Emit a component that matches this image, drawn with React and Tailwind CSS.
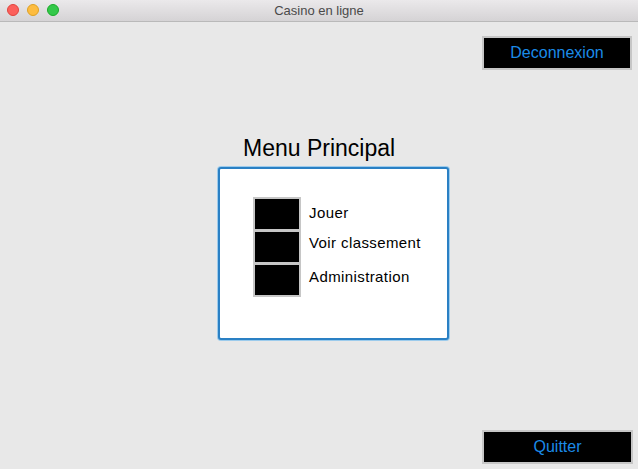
import React from 'react';

const font = { fontFamily: '"Liberation Sans", Arial, sans-serif' };

// Stacked black squares with a label on the right
const MenuRow = ({ label, pad, first }) => (
  <div className={`flex items-start ${first ? '' : '-mt-px'}`}>
    <div className="w-[48px] h-[34px] border-2 border-[#c6c6c6] bg-black shrink-0" />
    <span className={`ml-[8px] text-[15px] leading-[18px] tracking-[0.4px] text-black ${pad}`}>{label}</span>
  </div>
);

const BlackButton = ({ children, wide }) => (
  <button className={`${wide ? 'w-[151px]' : 'w-[150px]'} h-[34px] border-2 border-[#c6c6c6] bg-black text-[16px] text-[#1b8be8] flex items-center justify-center`}>
    {children}
  </button>
);

function App() {
  return (
    <div className="w-[638px] h-[469px] bg-[#e8e8e8] flex flex-col overflow-hidden" style={font}>
      {/* Title bar */}
      <div className="relative h-[22px] shrink-0 bg-gradient-to-b from-[#ebe9eb] to-[#d5d3d5] border-b border-[#b9b9b9] flex items-center justify-center">
        <div className="absolute left-[7px] top-[4px] flex gap-[8px]">
          <span className="w-[12px] h-[12px] rounded-full bg-[#fc605c] border border-[#e0443e]" />
          <span className="w-[12px] h-[12px] rounded-full bg-[#fdbc40] border border-[#dea123]" />
          <span className="w-[12px] h-[12px] rounded-full bg-[#34c84a] border border-[#1aab29]" />
        </div>
        <span className="text-[13px] text-[#4a4a4a]">Casino en ligne</span>
      </div>

      {/* Top-right action */}
      <div className="flex justify-end pr-[6px] pt-[14px]">
        <BlackButton>Deconnexion</BlackButton>
      </div>

      {/* Main menu */}
      <div className="ml-[218px] mt-[65px] flex flex-col">
        <h1 className="ml-[25px] text-[23px] leading-[26px] text-black">Menu Principal</h1>
        <div className="mt-[6px] w-[231px] h-[173px] bg-white rounded-[3px] border-2 border-[#2a80c4] ring-1 ring-[#9ccbec] pl-[33px] pt-[28px]">
          <MenuRow label="Jouer" pad="pt-[7px]" first />
          <MenuRow label="Voir classement" pad="pt-[4px]" />
          <MenuRow label="Administration" pad="pt-[5px]" />
        </div>
      </div>

      {/* Bottom-right action */}
      <div className="mt-auto flex justify-end pr-[5px] pb-[5px]">
        <BlackButton wide>Quitter</BlackButton>
      </div>
    </div>
  );
}

export default App;
